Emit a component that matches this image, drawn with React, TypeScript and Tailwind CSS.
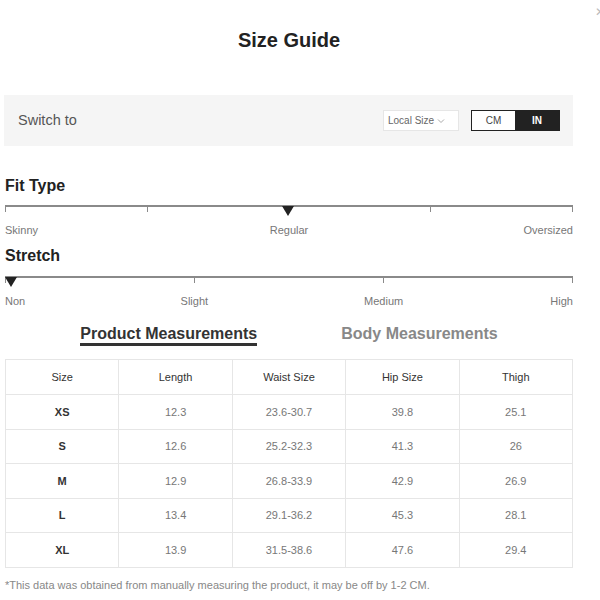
import React from "react";

const rows = [
  ["XS", "12.3", "23.6-30.7", "39.8", "25.1"],
  ["S", "12.6", "25.2-32.3", "41.3", "26"],
  ["M", "12.9", "26.8-33.9", "42.9", "26.9"],
  ["L", "13.4", "29.1-36.2", "45.3", "28.1"],
  ["XL", "13.9", "31.5-38.6", "47.6", "29.4"],
];

const headers = ["Size", "Length", "Waist Size", "Hip Size", "Thigh"];

function Scale({ ticks, marker, labels }: { ticks: number; marker: number; labels: string[] }) {
  return (
    <div>
      <div className="relative">
        <div className="h-[2px] bg-[#8a8a8a]" />
        <div className="flex justify-between">
          {Array.from({ length: ticks }).map((_, i) => (
            <div key={i} className="h-[5px] w-px bg-[#8a8a8a]" />
          ))}
        </div>
        <div
          className="absolute top-[1px] h-0 w-0 -translate-x-1/2 border-x-[6px] border-t-[10px] border-x-transparent border-t-[#222]"
          style={{ left: `${marker}%` }}
        />
      </div>
      <div className="mt-[12px] flex justify-between text-[11px] leading-3 text-[#777]">
        {labels.map((l, i) => (
          <div
            key={l}
            className={
              i === 0
                ? "flex w-0 justify-start whitespace-nowrap"
                : i === labels.length - 1
                  ? "flex w-0 justify-end whitespace-nowrap"
                  : "flex w-0 justify-center whitespace-nowrap"
            }
          >
            {l}
          </div>
        ))}
      </div>
    </div>
  );
}

export default function App() {
  return (
    <main
      className="relative h-[600px] w-[600px] overflow-hidden bg-white"
      style={{ fontFamily: '"Liberation Sans", Arial, sans-serif' }}
    >
      <div className="absolute right-[-5px] top-[6px] text-[12px] leading-3 text-[#bbb]">✕</div>
      <div className="ml-[5px] w-[568px]">
        <h1 className="pt-[28px] text-center text-[20px] font-bold leading-6 text-[#222]">Size Guide</h1>

        <div className="mt-[43px] flex h-[51px] items-center justify-between bg-[#f5f5f5] pl-[14px] pr-[13px] -ml-px">
          <span className="text-[14.5px] text-[#555]">Switch to</span>
          <div className="flex items-center gap-[12px]">
            <div className="flex h-[21px] w-[76px] items-center gap-[3px] border border-[#e6e6e6] bg-white pl-[4px] text-[10px] text-[#666]">
              Local Size
              <svg width="8" height="6" viewBox="0 0 8 6" fill="none" stroke="#aaa" strokeWidth="1">
                <path d="M1 1.5 4 4.5 7 1.5" />
              </svg>
            </div>
            <div className="flex h-[21px] border border-[#222] text-[10px]">
              <div className="flex w-[43px] items-center justify-center bg-white text-[#444]">CM</div>
              <div className="flex w-[44px] items-center justify-center bg-[#222] font-bold text-white">IN</div>
            </div>
          </div>
        </div>

        <h2 className="mt-[30px] text-[16px] font-bold leading-5 text-[#222]">Fit Type</h2>
        <div className="mt-[9px]">
          <Scale ticks={5} marker={49.8} labels={["Skinny", "Regular", "Oversized"]} />
        </div>

        <h2 className="mt-[10px] text-[16px] font-bold leading-5 text-[#222]">Stretch</h2>
        <div className="mt-[10px]">
          <Scale ticks={4} marker={1} labels={["Non", "Slight", "Medium", "High"]} />
        </div>

        <div className="mt-[18px] flex h-[21px] items-start justify-center gap-[84px]">
          <span className="border-b-[3px] border-[#333] text-[16px] font-bold leading-[18px] text-[#333]">
            Product Measurements
          </span>
          <span className="text-[16px] font-bold leading-[18px] text-[#888]">Body Measurements</span>
        </div>

        <table className="mt-[13px] w-full table-fixed border-collapse text-[11px]">
          <thead>
            <tr className="h-[35px]">
              {headers.map((h) => (
                <th key={h} className="border border-[#e6e6e6] text-center font-normal text-[#333]">
                  {h}
                </th>
              ))}
            </tr>
          </thead>
          <tbody>
            {rows.map((r) => (
              <tr key={r[0]} className="h-[34.6px]">
                {r.map((c, i) => (
                  <td
                    key={i}
                    className={
                      i === 0
                        ? "border border-[#e6e6e6] text-center font-bold text-[#333]"
                        : "border border-[#e6e6e6] text-center text-[#777]"
                    }
                  >
                    {c}
                  </td>
                ))}
              </tr>
            ))}
          </tbody>
        </table>

        <p className="mt-[9px] text-[11px] text-[#888]">
          *This data was obtained from manually measuring the product, it may be off by 1-2 CM.
        </p>
      </div>
    </main>
  );
}
